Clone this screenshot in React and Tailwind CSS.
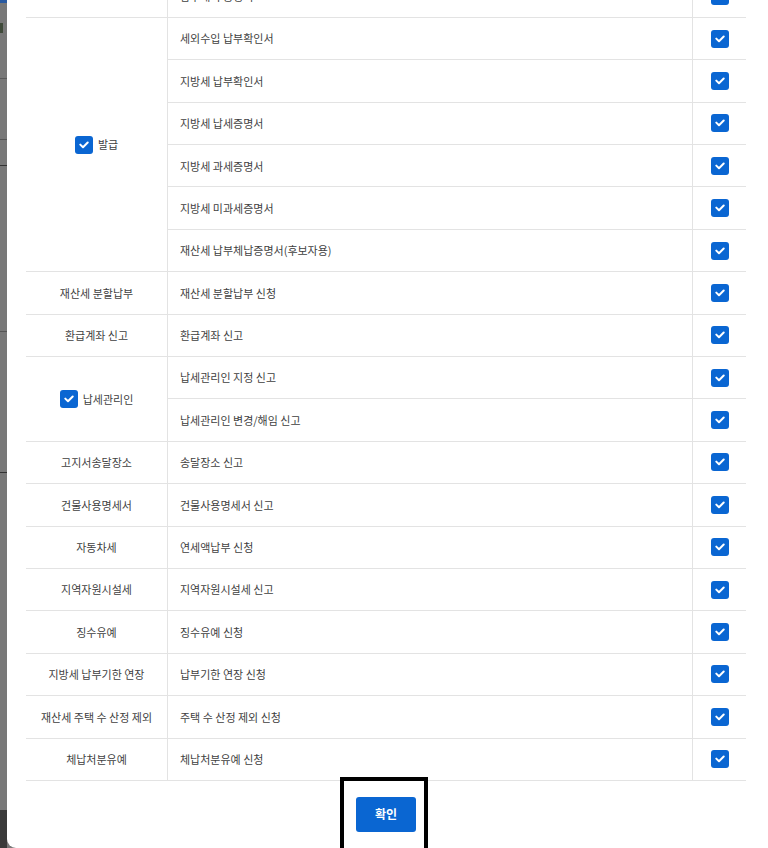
import React from "react";

const groups = [
  { label: "", items: ["납부내역 증명서"] },
  {
    label: "발급",
    check: true,
    items: [
      "세외수입 납부확인서",
      "지방세 납부확인서",
      "지방세 납세증명서",
      "지방세 과세증명서",
      "지방세 미과세증명서",
      "재산세 납부체납증명서(후보자용)",
    ],
  },
  { label: "재산세 분할납부", items: ["재산세 분할납부 신청"] },
  { label: "환급계좌 신고", items: ["환급계좌 신고"] },
  {
    label: "납세관리인",
    check: true,
    items: ["납세관리인 지정 신고", "납세관리인 변경/해임 신고"],
  },
  { label: "고지서송달장소", items: ["송달장소 신고"] },
  { label: "건물사용명세서", items: ["건물사용명세서 신고"] },
  { label: "자동차세", items: ["연세액납부 신청"] },
  { label: "지역자원시설세", items: ["지역자원시설세 신고"] },
  { label: "징수유예", items: ["징수유예 신청"] },
  { label: "지방세 납부기한 연장", items: ["납부기한 연장 신청"] },
  { label: "재산세 주택 수 산정 제외", items: ["주택 수 산정 제외 신청"] },
  { label: "체납처분유예", items: ["체납처분유예 신청"] },
];

const spanClass = { 1: "row-span-1", 2: "row-span-2", 6: "row-span-6" };

const CheckBox = () => (
  <span className="flex h-[18px] w-[18px] shrink-0 items-center justify-center rounded-[3px] bg-[#0a66d2]">
    <svg width="10" height="8" viewBox="0 0 10 8" fill="none">
      <path d="M1.3 3.6 L4 6.2 L8.7 1.5" stroke="white" strokeWidth="2" strokeLinecap="round" strokeLinejoin="round" />
    </svg>
  </span>
);

export default function App() {
  return (
    <div
      className="flex h-[848px] w-[768px] overflow-hidden bg-[#787878]"
      style={{ fontFamily: '"Noto Sans CJK KR", "Noto Sans", sans-serif' }}
    >
      <div className="flex w-[7px] shrink-0 flex-col bg-[#787878]">
        <div className="h-[3px] bg-[#2a5aa0]" />
        <div className="mt-[20px] h-[10px] w-[3px] bg-[#3f4a3a]" />
        <div className="mt-[45px] h-px bg-[#5a5a5a]" />
        <div className="mt-[60px] h-px bg-[#555]" />
        <div className="mt-[25px] h-px bg-[#333]" />
        <div className="mt-[165px] h-px bg-[#555]" />
        <div className="mt-[140px] h-px bg-[#333]" />
        <div className="flex-1" />
        <div className="h-[38px] bg-[#3a3a3a]" />
      </div>
      <div className="relative h-[848px] min-w-0 flex-1 overflow-hidden rounded-bl-[9px] bg-white pl-[19px]">
        <div className="-mt-[24.5px] grid w-[720px] auto-rows-[42.4px] grid-cols-[142px_525px_53px] text-[11px] text-[#3f3f3f]">
          {groups.map((g, gi) => (
            <React.Fragment key={gi}>
              <div
                className={`${spanClass[g.items.length]} col-start-1 flex items-center justify-center gap-[5px] border-b border-r border-[#e3e3e3]`}
                style={{ gridRow: `span ${g.items.length}` }}
              >
                {g.check && <CheckBox />}
                <span>{g.label}</span>
              </div>
              {g.items.map((it, ii) => (
                <React.Fragment key={ii}>
                  <div className="col-start-2 flex items-center border-b border-r border-[#e3e3e3] pl-[12px]">
                    {it}
                  </div>
                  <div className="col-start-3 flex items-center justify-center border-b border-[#e3e3e3]">
                    <CheckBox />
                  </div>
                </React.Fragment>
              ))}
            </React.Fragment>
          ))}
        </div>
        <div className="flex w-[720px] justify-center pt-[16px]">
          <button
            type="button"
            className="h-[35px] w-[60px] rounded-[3px] bg-[#0a66d2] text-[12px] font-bold text-white"
          >
            확인
          </button>
        </div>
        <div className="absolute left-[333px] top-[777px] h-[80px] w-[88px] border-4 border-black" />
      </div>
    </div>
  );
}
